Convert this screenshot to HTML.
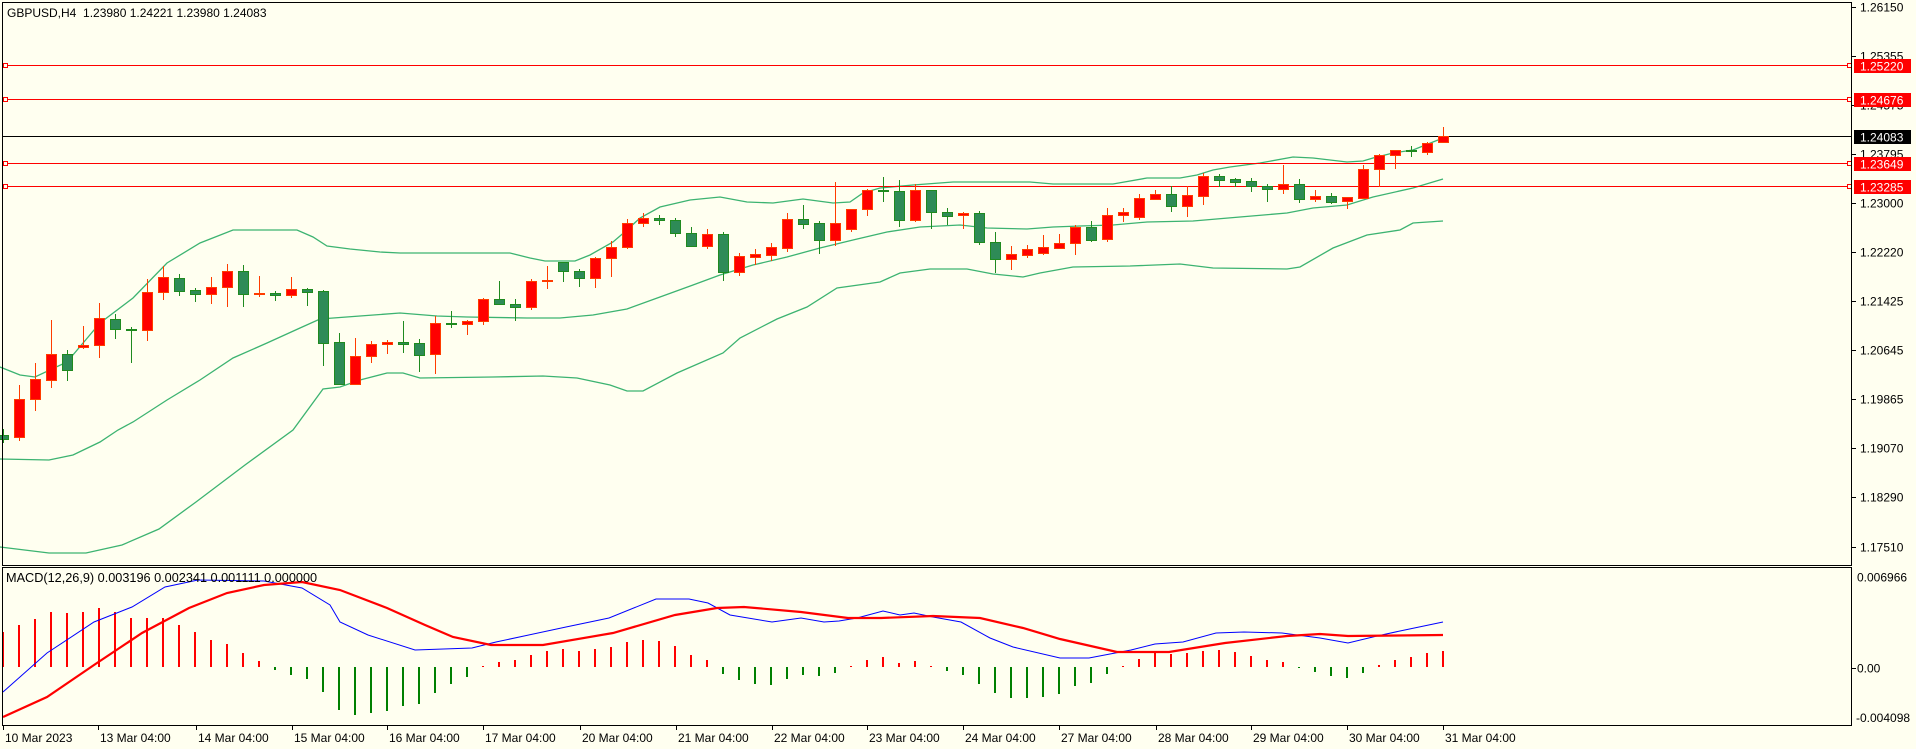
<!DOCTYPE html>
<html><head><meta charset="utf-8"><style>
html,body{margin:0;padding:0;background:#fffff0;width:1916px;height:749px;overflow:hidden}
svg{position:absolute;left:0;top:0;font-family:"Liberation Sans",sans-serif;font-size:12px}
.r{stroke:#ff3c00;fill:#ff0000}
.g{stroke:#1f8a1f;fill:#2e8b57}
</style></head><body>
<svg width="1916" height="749" viewBox="0 0 1916 749" xmlns="http://www.w3.org/2000/svg" shape-rendering="crispEdges">
<rect x="0" y="0" width="1916" height="749" fill="#fffff0"/>
<g fill="none" stroke="#3cb371" stroke-width="1.3" shape-rendering="auto">
<polyline points="0,367 20,375 35,377 67,362 100,323 133,298 167,263 200,243 233,230 297,230 313,237 327,246 350,249 380,252 400,253 510,253 530,258 545,261 575,261 590,255 613,242 627,230 640,218 660,207 690,200 720,197 747,202 773,203 803,199 833,203 850,202 863,193 880,188 913,185 953,182 1030,182 1053,184 1113,184 1147,178 1180,178 1197,175 1213,170 1230,167 1260,163 1293,157 1313,158 1347,162 1363,161 1373,158 1393,153 1413,150 1443,138"/>
<polyline points="0,459 49,460 73,455 100,442 118,430 133,422 167,400 200,380 233,358 267,343 300,328 320,319 360,316 400,313 437,316 467,317 527,318 560,318 593,315 627,309 660,297 693,285 720,275 753,265 787,257 820,248 853,240 887,232 920,227 960,225 987,228 1027,229 1053,227 1080,226 1113,225 1147,222 1193,221 1240,217 1287,213 1313,208 1347,205 1373,197 1413,188 1443,179"/>
<polyline points="0,547 49,553 86,553 122,545 159,529 196,502 245,465 293,430 323,389 340,387 360,380 387,373 403,373 420,378 493,377 543,376 577,378 610,385 627,391 643,391 677,373 723,353 740,338 777,319 807,307 837,288 880,282 900,273 930,269 967,269 993,274 1023,277 1040,273 1073,267 1130,266 1180,264 1213,268 1287,269 1300,267 1333,248 1367,235 1400,230 1413,223 1443,221"/>
</g>
<g stroke-width="1">
<line x1="2" y1="65.5" x2="1852" y2="65.5" stroke="#ff0000"/>
<line x1="2" y1="99.5" x2="1852" y2="99.5" stroke="#ff0000"/>
<line x1="2" y1="136.5" x2="1852" y2="136.5" stroke="#000"/>
<line x1="2" y1="163.5" x2="1852" y2="163.5" stroke="#ff0000"/>
<line x1="2" y1="186.5" x2="1852" y2="186.5" stroke="#ff0000"/>
</g>
<g fill="#fffff0" stroke="#ff0000">
<rect x="3.5" y="63.5" width="4" height="4"/><rect x="1847.5" y="63.5" width="4" height="4"/>
<rect x="3.5" y="97.5" width="4" height="4"/><rect x="1847.5" y="97.5" width="4" height="4"/>
<rect x="3.5" y="161.5" width="4" height="4"/><rect x="1847.5" y="161.5" width="4" height="4"/>
<rect x="3.5" y="184.5" width="4" height="4"/><rect x="1847.5" y="184.5" width="4" height="4"/>
</g>
<g>
<line class="g" x1="3.5" y1="429" x2="3.5" y2="443"/><rect class="g" x="-1.5" y="435.5" width="10" height="4"/>
<line class="r" x1="19.5" y1="385" x2="19.5" y2="441"/><rect class="r" x="14.5" y="399.5" width="10" height="38"/>
<line class="r" x1="35.5" y1="363" x2="35.5" y2="411"/><rect class="r" x="30.5" y="379.5" width="10" height="20"/>
<line class="r" x1="51.5" y1="320" x2="51.5" y2="388"/><rect class="r" x="46.5" y="354.5" width="10" height="26"/>
<line class="g" x1="67.5" y1="350" x2="67.5" y2="381"/><rect class="g" x="62.5" y="354.5" width="10" height="16"/>
<line class="r" x1="83.5" y1="326" x2="83.5" y2="349"/><rect class="r" x="78.5" y="345.5" width="10" height="2"/>
<line class="r" x1="99.5" y1="303" x2="99.5" y2="358"/><rect class="r" x="94.5" y="318.5" width="10" height="27"/>
<line class="g" x1="115.5" y1="314" x2="115.5" y2="339"/><rect class="g" x="110.5" y="319.5" width="10" height="10"/>
<line class="g" x1="131.5" y1="327" x2="131.5" y2="363"/><rect class="g" x="126.5" y="329.5" width="10" height="1"/>
<line class="r" x1="147.5" y1="279" x2="147.5" y2="341"/><rect class="r" x="142.5" y="292.5" width="10" height="38"/>
<line class="r" x1="163.5" y1="266" x2="163.5" y2="300"/><rect class="r" x="158.5" y="277.5" width="10" height="15"/>
<line class="g" x1="179.5" y1="274" x2="179.5" y2="296"/><rect class="g" x="174.5" y="278.5" width="10" height="13"/>
<line class="g" x1="195.5" y1="288" x2="195.5" y2="302"/><rect class="g" x="190.5" y="290.5" width="10" height="4"/>
<line class="r" x1="211.5" y1="277" x2="211.5" y2="304"/><rect class="r" x="206.5" y="287.5" width="10" height="7"/>
<line class="r" x1="227.5" y1="264" x2="227.5" y2="307"/><rect class="r" x="222.5" y="271.5" width="10" height="16"/>
<line class="g" x1="243.5" y1="265" x2="243.5" y2="307"/><rect class="g" x="238.5" y="271.5" width="10" height="23"/>
<line class="r" x1="259.5" y1="276" x2="259.5" y2="297"/><rect class="r" x="254.5" y="293.5" width="10" height="1"/>
<line class="g" x1="275.5" y1="291" x2="275.5" y2="301"/><rect class="g" x="270.5" y="293.5" width="10" height="2"/>
<line class="r" x1="291.5" y1="277" x2="291.5" y2="298"/><rect class="r" x="286.5" y="289.5" width="10" height="6"/>
<line class="g" x1="307.5" y1="288" x2="307.5" y2="306"/><rect class="g" x="302.5" y="289.5" width="10" height="3"/>
<line class="g" x1="323.5" y1="290" x2="323.5" y2="366"/><rect class="g" x="318.5" y="291.5" width="10" height="52"/>
<line class="g" x1="339.5" y1="333" x2="339.5" y2="385"/><rect class="g" x="334.5" y="342.5" width="10" height="42"/>
<line class="r" x1="355.5" y1="338" x2="355.5" y2="385"/><rect class="r" x="350.5" y="356.5" width="10" height="28"/>
<line class="r" x1="371.5" y1="341" x2="371.5" y2="363"/><rect class="r" x="366.5" y="344.5" width="10" height="12"/>
<line class="r" x1="387.5" y1="340" x2="387.5" y2="354"/><rect class="r" x="382.5" y="342.5" width="10" height="2"/>
<line class="g" x1="403.5" y1="321" x2="403.5" y2="353"/><rect class="g" x="398.5" y="342.5" width="10" height="2"/>
<line class="g" x1="419.5" y1="339" x2="419.5" y2="372"/><rect class="g" x="414.5" y="343.5" width="10" height="12"/>
<line class="r" x1="435.5" y1="316" x2="435.5" y2="374"/><rect class="r" x="430.5" y="323.5" width="10" height="31"/>
<line class="g" x1="451.5" y1="311" x2="451.5" y2="328"/><rect class="g" x="446.5" y="323.5" width="10" height="1"/>
<line class="r" x1="467.5" y1="320" x2="467.5" y2="335"/><rect class="r" x="462.5" y="321.5" width="10" height="3"/>
<line class="r" x1="483.5" y1="298" x2="483.5" y2="325"/><rect class="r" x="478.5" y="299.5" width="10" height="22"/>
<line class="g" x1="499.5" y1="281" x2="499.5" y2="305"/><rect class="g" x="494.5" y="299.5" width="10" height="5"/>
<line class="g" x1="515.5" y1="299" x2="515.5" y2="321"/><rect class="g" x="510.5" y="304.5" width="10" height="3"/>
<line class="r" x1="531.5" y1="279" x2="531.5" y2="310"/><rect class="r" x="526.5" y="281.5" width="10" height="26"/>
<line class="r" x1="547.5" y1="266" x2="547.5" y2="289"/><rect class="r" x="542.5" y="280.5" width="10" height="1"/>
<line class="g" x1="563.5" y1="262" x2="563.5" y2="282"/><rect class="g" x="558.5" y="262.5" width="10" height="9"/>
<line class="g" x1="579.5" y1="269" x2="579.5" y2="287"/><rect class="g" x="574.5" y="271.5" width="10" height="7"/>
<line class="r" x1="595.5" y1="257" x2="595.5" y2="288"/><rect class="r" x="590.5" y="258.5" width="10" height="20"/>
<line class="r" x1="611.5" y1="241" x2="611.5" y2="277"/><rect class="r" x="606.5" y="247.5" width="10" height="11"/>
<line class="r" x1="627.5" y1="219" x2="627.5" y2="249"/><rect class="r" x="622.5" y="223.5" width="10" height="24"/>
<line class="r" x1="643.5" y1="213" x2="643.5" y2="227"/><rect class="r" x="638.5" y="218.5" width="10" height="5"/>
<line class="g" x1="659.5" y1="215" x2="659.5" y2="225"/><rect class="g" x="654.5" y="218.5" width="10" height="2"/>
<line class="g" x1="675.5" y1="218" x2="675.5" y2="237"/><rect class="g" x="670.5" y="220.5" width="10" height="13"/>
<line class="g" x1="691.5" y1="227" x2="691.5" y2="246"/><rect class="g" x="686.5" y="233.5" width="10" height="13"/>
<line class="r" x1="707.5" y1="229" x2="707.5" y2="249"/><rect class="r" x="702.5" y="234.5" width="10" height="12"/>
<line class="g" x1="723.5" y1="232" x2="723.5" y2="281"/><rect class="g" x="718.5" y="234.5" width="10" height="38"/>
<line class="r" x1="739.5" y1="253" x2="739.5" y2="276"/><rect class="r" x="734.5" y="256.5" width="10" height="16"/>
<line class="r" x1="755.5" y1="249" x2="755.5" y2="265"/><rect class="r" x="750.5" y="254.5" width="10" height="3"/>
<line class="r" x1="771.5" y1="243" x2="771.5" y2="261"/><rect class="r" x="766.5" y="247.5" width="10" height="8"/>
<line class="r" x1="787.5" y1="213" x2="787.5" y2="252"/><rect class="r" x="782.5" y="219.5" width="10" height="29"/>
<line class="g" x1="803.5" y1="205" x2="803.5" y2="229"/><rect class="g" x="798.5" y="219.5" width="10" height="5"/>
<line class="g" x1="819.5" y1="221" x2="819.5" y2="254"/><rect class="g" x="814.5" y="223.5" width="10" height="17"/>
<line class="r" x1="835.5" y1="182" x2="835.5" y2="246"/><rect class="r" x="830.5" y="223.5" width="10" height="17"/>
<line class="r" x1="851.5" y1="209" x2="851.5" y2="232"/><rect class="r" x="846.5" y="209.5" width="10" height="20"/>
<line class="r" x1="867.5" y1="189" x2="867.5" y2="216"/><rect class="r" x="862.5" y="190.5" width="10" height="19"/>
<line class="g" x1="883.5" y1="177" x2="883.5" y2="202"/><rect class="g" x="878.5" y="190.5" width="10" height="1"/>
<line class="g" x1="899.5" y1="180" x2="899.5" y2="227"/><rect class="g" x="894.5" y="191.5" width="10" height="29"/>
<line class="r" x1="915.5" y1="184" x2="915.5" y2="222"/><rect class="r" x="910.5" y="190.5" width="10" height="30"/>
<line class="g" x1="931.5" y1="190" x2="931.5" y2="229"/><rect class="g" x="926.5" y="190.5" width="10" height="22"/>
<line class="g" x1="947.5" y1="208" x2="947.5" y2="225"/><rect class="g" x="942.5" y="212.5" width="10" height="4"/>
<line class="r" x1="963.5" y1="212" x2="963.5" y2="229"/><rect class="r" x="958.5" y="213.5" width="10" height="2"/>
<line class="g" x1="979.5" y1="211" x2="979.5" y2="245"/><rect class="g" x="974.5" y="213.5" width="10" height="29"/>
<line class="g" x1="995.5" y1="232" x2="995.5" y2="273"/><rect class="g" x="990.5" y="242.5" width="10" height="17"/>
<line class="r" x1="1011.5" y1="246" x2="1011.5" y2="270"/><rect class="r" x="1006.5" y="254.5" width="10" height="5"/>
<line class="r" x1="1027.5" y1="245" x2="1027.5" y2="258"/><rect class="r" x="1022.5" y="249.5" width="10" height="6"/>
<line class="r" x1="1043.5" y1="235" x2="1043.5" y2="255"/><rect class="r" x="1038.5" y="247.5" width="10" height="6"/>
<line class="r" x1="1059.5" y1="234" x2="1059.5" y2="248"/><rect class="r" x="1054.5" y="243.5" width="10" height="5"/>
<line class="r" x1="1075.5" y1="225" x2="1075.5" y2="255"/><rect class="r" x="1070.5" y="227.5" width="10" height="16"/>
<line class="g" x1="1091.5" y1="221" x2="1091.5" y2="242"/><rect class="g" x="1086.5" y="227.5" width="10" height="13"/>
<line class="r" x1="1107.5" y1="208" x2="1107.5" y2="242"/><rect class="r" x="1102.5" y="215.5" width="10" height="24"/>
<line class="r" x1="1123.5" y1="208" x2="1123.5" y2="222"/><rect class="r" x="1118.5" y="212.5" width="10" height="3"/>
<line class="r" x1="1139.5" y1="194" x2="1139.5" y2="220"/><rect class="r" x="1134.5" y="198.5" width="10" height="19"/>
<line class="r" x1="1155.5" y1="190" x2="1155.5" y2="200"/><rect class="r" x="1150.5" y="194.5" width="10" height="5"/>
<line class="g" x1="1171.5" y1="186" x2="1171.5" y2="212"/><rect class="g" x="1166.5" y="194.5" width="10" height="12"/>
<line class="r" x1="1187.5" y1="186" x2="1187.5" y2="217"/><rect class="r" x="1182.5" y="195.5" width="10" height="11"/>
<line class="r" x1="1203.5" y1="173" x2="1203.5" y2="205"/><rect class="r" x="1198.5" y="176.5" width="10" height="20"/>
<line class="g" x1="1219.5" y1="174" x2="1219.5" y2="187"/><rect class="g" x="1214.5" y="176.5" width="10" height="4"/>
<line class="g" x1="1235.5" y1="178" x2="1235.5" y2="187"/><rect class="g" x="1230.5" y="179.5" width="10" height="3"/>
<line class="g" x1="1251.5" y1="178" x2="1251.5" y2="192"/><rect class="g" x="1246.5" y="181.5" width="10" height="5"/>
<line class="g" x1="1267.5" y1="184" x2="1267.5" y2="202"/><rect class="g" x="1262.5" y="186.5" width="10" height="3"/>
<line class="r" x1="1283.5" y1="165" x2="1283.5" y2="194"/><rect class="r" x="1278.5" y="184.5" width="10" height="5"/>
<line class="g" x1="1299.5" y1="179" x2="1299.5" y2="203"/><rect class="g" x="1294.5" y="184.5" width="10" height="15"/>
<line class="r" x1="1315.5" y1="190" x2="1315.5" y2="202"/><rect class="r" x="1310.5" y="196.5" width="10" height="3"/>
<line class="g" x1="1331.5" y1="193" x2="1331.5" y2="204"/><rect class="g" x="1326.5" y="196.5" width="10" height="6"/>
<line class="r" x1="1347.5" y1="197" x2="1347.5" y2="209"/><rect class="r" x="1342.5" y="197.5" width="10" height="4"/>
<line class="r" x1="1363.5" y1="165" x2="1363.5" y2="199"/><rect class="r" x="1358.5" y="169.5" width="10" height="29"/>
<line class="r" x1="1379.5" y1="154" x2="1379.5" y2="187"/><rect class="r" x="1374.5" y="155.5" width="10" height="14"/>
<line class="r" x1="1395.5" y1="150" x2="1395.5" y2="169"/><rect class="r" x="1390.5" y="150.5" width="10" height="5"/>
<line class="g" x1="1411.5" y1="146" x2="1411.5" y2="157"/><rect class="g" x="1406.5" y="150.5" width="10" height="1"/>
<line class="r" x1="1427.5" y1="142" x2="1427.5" y2="155"/><rect class="r" x="1422.5" y="143.5" width="10" height="9"/>
<line class="r" x1="1443.5" y1="127" x2="1443.5" y2="142"/><rect class="r" x="1438.5" y="136.5" width="10" height="6"/>
</g>
<g fill="#ff0000">
<rect x="2" y="632" width="2" height="35"/><rect x="18" y="625" width="2" height="42"/><rect x="34" y="619" width="2" height="48"/><rect x="50" y="612" width="2" height="55"/><rect x="66" y="613" width="2" height="54"/><rect x="82" y="612" width="2" height="55"/><rect x="98" y="608" width="2" height="59"/><rect x="114" y="612" width="2" height="55"/><rect x="130" y="618" width="2" height="49"/><rect x="146" y="618" width="2" height="49"/><rect x="162" y="618" width="2" height="49"/><rect x="178" y="625" width="2" height="42"/><rect x="194" y="632" width="2" height="35"/><rect x="210" y="640" width="2" height="27"/><rect x="226" y="644" width="2" height="23"/><rect x="242" y="653" width="2" height="14"/><rect x="258" y="661" width="2" height="6"/>
<rect x="482" y="666" width="2" height="1"/><rect x="498" y="662" width="2" height="5"/><rect x="514" y="660" width="2" height="7"/><rect x="530" y="655" width="2" height="12"/><rect x="546" y="651" width="2" height="16"/><rect x="562" y="649" width="2" height="18"/><rect x="578" y="651" width="2" height="16"/><rect x="594" y="649" width="2" height="18"/><rect x="610" y="647" width="2" height="20"/><rect x="626" y="642" width="2" height="25"/><rect x="642" y="640" width="2" height="27"/><rect x="658" y="641" width="2" height="26"/><rect x="674" y="646" width="2" height="21"/><rect x="690" y="655" width="2" height="12"/><rect x="706" y="660" width="2" height="7"/>
<rect x="850" y="666" width="2" height="1"/><rect x="866" y="660" width="2" height="7"/><rect x="882" y="657" width="2" height="10"/><rect x="898" y="663" width="2" height="4"/><rect x="914" y="661" width="2" height="6"/><rect x="930" y="666" width="2" height="1"/>
<rect x="1122" y="666" width="2" height="1"/><rect x="1138" y="659" width="2" height="8"/><rect x="1154" y="653" width="2" height="14"/><rect x="1170" y="654" width="2" height="13"/><rect x="1186" y="653" width="2" height="14"/><rect x="1202" y="651" width="2" height="16"/><rect x="1218" y="650" width="2" height="17"/><rect x="1234" y="652" width="2" height="15"/><rect x="1250" y="656" width="2" height="11"/><rect x="1266" y="660" width="2" height="7"/><rect x="1282" y="662" width="2" height="5"/>
<rect x="1378" y="665" width="2" height="2"/><rect x="1394" y="660" width="2" height="7"/><rect x="1410" y="657" width="2" height="10"/><rect x="1426" y="653" width="2" height="14"/><rect x="1442" y="651" width="2" height="16"/>
</g>
<g fill="#008000">
<rect x="274" y="667" width="2" height="3"/><rect x="290" y="667" width="2" height="8"/><rect x="306" y="667" width="2" height="12"/><rect x="322" y="667" width="2" height="25"/><rect x="338" y="667" width="2" height="43"/><rect x="354" y="667" width="2" height="48"/><rect x="370" y="667" width="2" height="46"/><rect x="386" y="667" width="2" height="44"/><rect x="402" y="667" width="2" height="39"/><rect x="418" y="667" width="2" height="37"/><rect x="434" y="667" width="2" height="26"/><rect x="450" y="667" width="2" height="17"/><rect x="466" y="667" width="2" height="10"/>
<rect x="722" y="667" width="2" height="7"/><rect x="738" y="667" width="2" height="13"/><rect x="754" y="667" width="2" height="17"/><rect x="770" y="667" width="2" height="18"/><rect x="786" y="667" width="2" height="12"/><rect x="802" y="667" width="2" height="8"/><rect x="818" y="667" width="2" height="9"/><rect x="834" y="667" width="2" height="6"/>
<rect x="946" y="667" width="2" height="4"/><rect x="962" y="667" width="2" height="8"/><rect x="978" y="667" width="2" height="17"/><rect x="994" y="667" width="2" height="26"/><rect x="1010" y="667" width="2" height="31"/><rect x="1026" y="667" width="2" height="31"/><rect x="1042" y="667" width="2" height="30"/><rect x="1058" y="667" width="2" height="27"/><rect x="1074" y="667" width="2" height="19"/><rect x="1090" y="667" width="2" height="16"/><rect x="1106" y="667" width="2" height="7"/>
<rect x="1298" y="667" width="2" height="1"/><rect x="1314" y="667" width="2" height="5"/><rect x="1330" y="667" width="2" height="9"/><rect x="1346" y="667" width="2" height="11"/><rect x="1362" y="667" width="2" height="6"/>
</g>
<g fill="none" shape-rendering="auto">
<polyline stroke="#0000ff" stroke-width="1" points="3,692 47,653 94,622 132,607 165,587 198,580 264,581 302,588 330,605 340,622 368,635 415,650 472,648 496,642 566,627 609,618 656,599 689,599 708,603 730,615 772,622 801,618 824,622 839,621 857,618 883,611 900,615 914,613 933,617 961,622 990,638 1013,647 1060,658 1089,658 1131,650 1155,644 1183,642 1216,633 1244,632 1282,633 1320,638 1348,643 1377,636 1400,631 1443,622"/>
<polyline stroke="#ff0000" stroke-width="2.2" points="3,717 47,697 94,665 142,633 189,608 227,593 264,585 302,582 340,590 387,608 425,625 453,637 491,645 543,645 613,633 675,615 717,608 744,607 801,612 848,618 881,618 933,616 980,618 1023,628 1060,639 1117,652 1169,652 1225,643 1287,636 1320,634 1348,636 1443,635"/>
</g>
<g fill="none" stroke="#000" stroke-width="1">
<rect x="2.5" y="2.5" width="1849" height="563"/>
<rect x="2.5" y="567.5" width="1849" height="158"/>
</g>
<g stroke="#000">
<line x1="1852" y1="7.5" x2="1856" y2="7.5"/><line x1="1852" y1="56.5" x2="1856" y2="56.5"/><line x1="1852" y1="105.5" x2="1856" y2="105.5"/><line x1="1852" y1="154.5" x2="1856" y2="154.5"/><line x1="1852" y1="203.5" x2="1856" y2="203.5"/><line x1="1852" y1="252.5" x2="1856" y2="252.5"/><line x1="1852" y1="301.5" x2="1856" y2="301.5"/><line x1="1852" y1="350.5" x2="1856" y2="350.5"/><line x1="1852" y1="399.5" x2="1856" y2="399.5"/><line x1="1852" y1="448.5" x2="1856" y2="448.5"/><line x1="1852" y1="497.5" x2="1856" y2="497.5"/><line x1="1852" y1="547.5" x2="1856" y2="547.5"/>
<line x1="1852" y1="668.5" x2="1856" y2="668.5"/>
</g>
<g fill="#000">
<text x="1860" y="11.5">1.26150</text><text x="1860" y="60.5">1.25355</text><text x="1860" y="109.5">1.24575</text><text x="1860" y="158.5">1.23795</text><text x="1860" y="207.5">1.23000</text><text x="1860" y="256.5">1.22220</text><text x="1860" y="305.5">1.21425</text><text x="1860" y="354.5">1.20645</text><text x="1860" y="403.5">1.19865</text><text x="1860" y="452.5">1.19070</text><text x="1860" y="501.5">1.18290</text><text x="1860" y="551.5">1.17510</text>
<text x="1857" y="581.5">0.006966</text><text x="1857" y="672.5">0.00</text><text x="1856" y="722">-0.004098</text>
</g>
<rect x="1854" y="59" width="57" height="14" fill="#ff0000"/><text x="1860" y="70.5" fill="#fff">1.25220</text>
<rect x="1854" y="93" width="57" height="14" fill="#ff0000"/><text x="1860" y="104.5" fill="#fff">1.24676</text>
<rect x="1854" y="130" width="57" height="14" fill="#000"/><text x="1860" y="141.5" fill="#fff">1.24083</text>
<rect x="1854" y="157" width="57" height="14" fill="#ff0000"/><text x="1860" y="168.5" fill="#fff">1.23649</text>
<rect x="1854" y="180" width="57" height="14" fill="#ff0000"/><text x="1860" y="191.5" fill="#fff">1.23285</text>
<text x="7" y="17" fill="#000">GBPUSD,H4&#160; 1.23980 1.24221 1.23980 1.24083</text>
<text x="6" y="582" fill="#000" style="font-size:12.7px">MACD(12,26,9) 0.003196 0.002341 0.001111 0.000000</text>
<g stroke="#000">
<line x1="3.5" y1="726" x2="3.5" y2="730"/><line x1="98.5" y1="726" x2="98.5" y2="730"/><line x1="196.5" y1="726" x2="196.5" y2="730"/><line x1="292.5" y1="726" x2="292.5" y2="730"/><line x1="387.5" y1="726" x2="387.5" y2="730"/><line x1="483.5" y1="726" x2="483.5" y2="730"/><line x1="580.5" y1="726" x2="580.5" y2="730"/><line x1="676.5" y1="726" x2="676.5" y2="730"/><line x1="772.5" y1="726" x2="772.5" y2="730"/><line x1="867.5" y1="726" x2="867.5" y2="730"/><line x1="963.5" y1="726" x2="963.5" y2="730"/><line x1="1059.5" y1="726" x2="1059.5" y2="730"/><line x1="1156.5" y1="726" x2="1156.5" y2="730"/><line x1="1251.5" y1="726" x2="1251.5" y2="730"/><line x1="1347.5" y1="726" x2="1347.5" y2="730"/><line x1="1443.5" y1="726" x2="1443.5" y2="730"/>
</g>
<g fill="#000">
<text x="5" y="742">10 Mar 2023</text><text x="100" y="742">13 Mar 04:00</text><text x="198" y="742">14 Mar 04:00</text><text x="294" y="742">15 Mar 04:00</text><text x="389" y="742">16 Mar 04:00</text><text x="485" y="742">17 Mar 04:00</text><text x="582" y="742">20 Mar 04:00</text><text x="678" y="742">21 Mar 04:00</text><text x="774" y="742">22 Mar 04:00</text><text x="869" y="742">23 Mar 04:00</text><text x="965" y="742">24 Mar 04:00</text><text x="1061" y="742">27 Mar 04:00</text><text x="1158" y="742">28 Mar 04:00</text><text x="1253" y="742">29 Mar 04:00</text><text x="1349" y="742">30 Mar 04:00</text><text x="1445" y="742">31 Mar 04:00</text>
</g>
</svg>
</body></html>
